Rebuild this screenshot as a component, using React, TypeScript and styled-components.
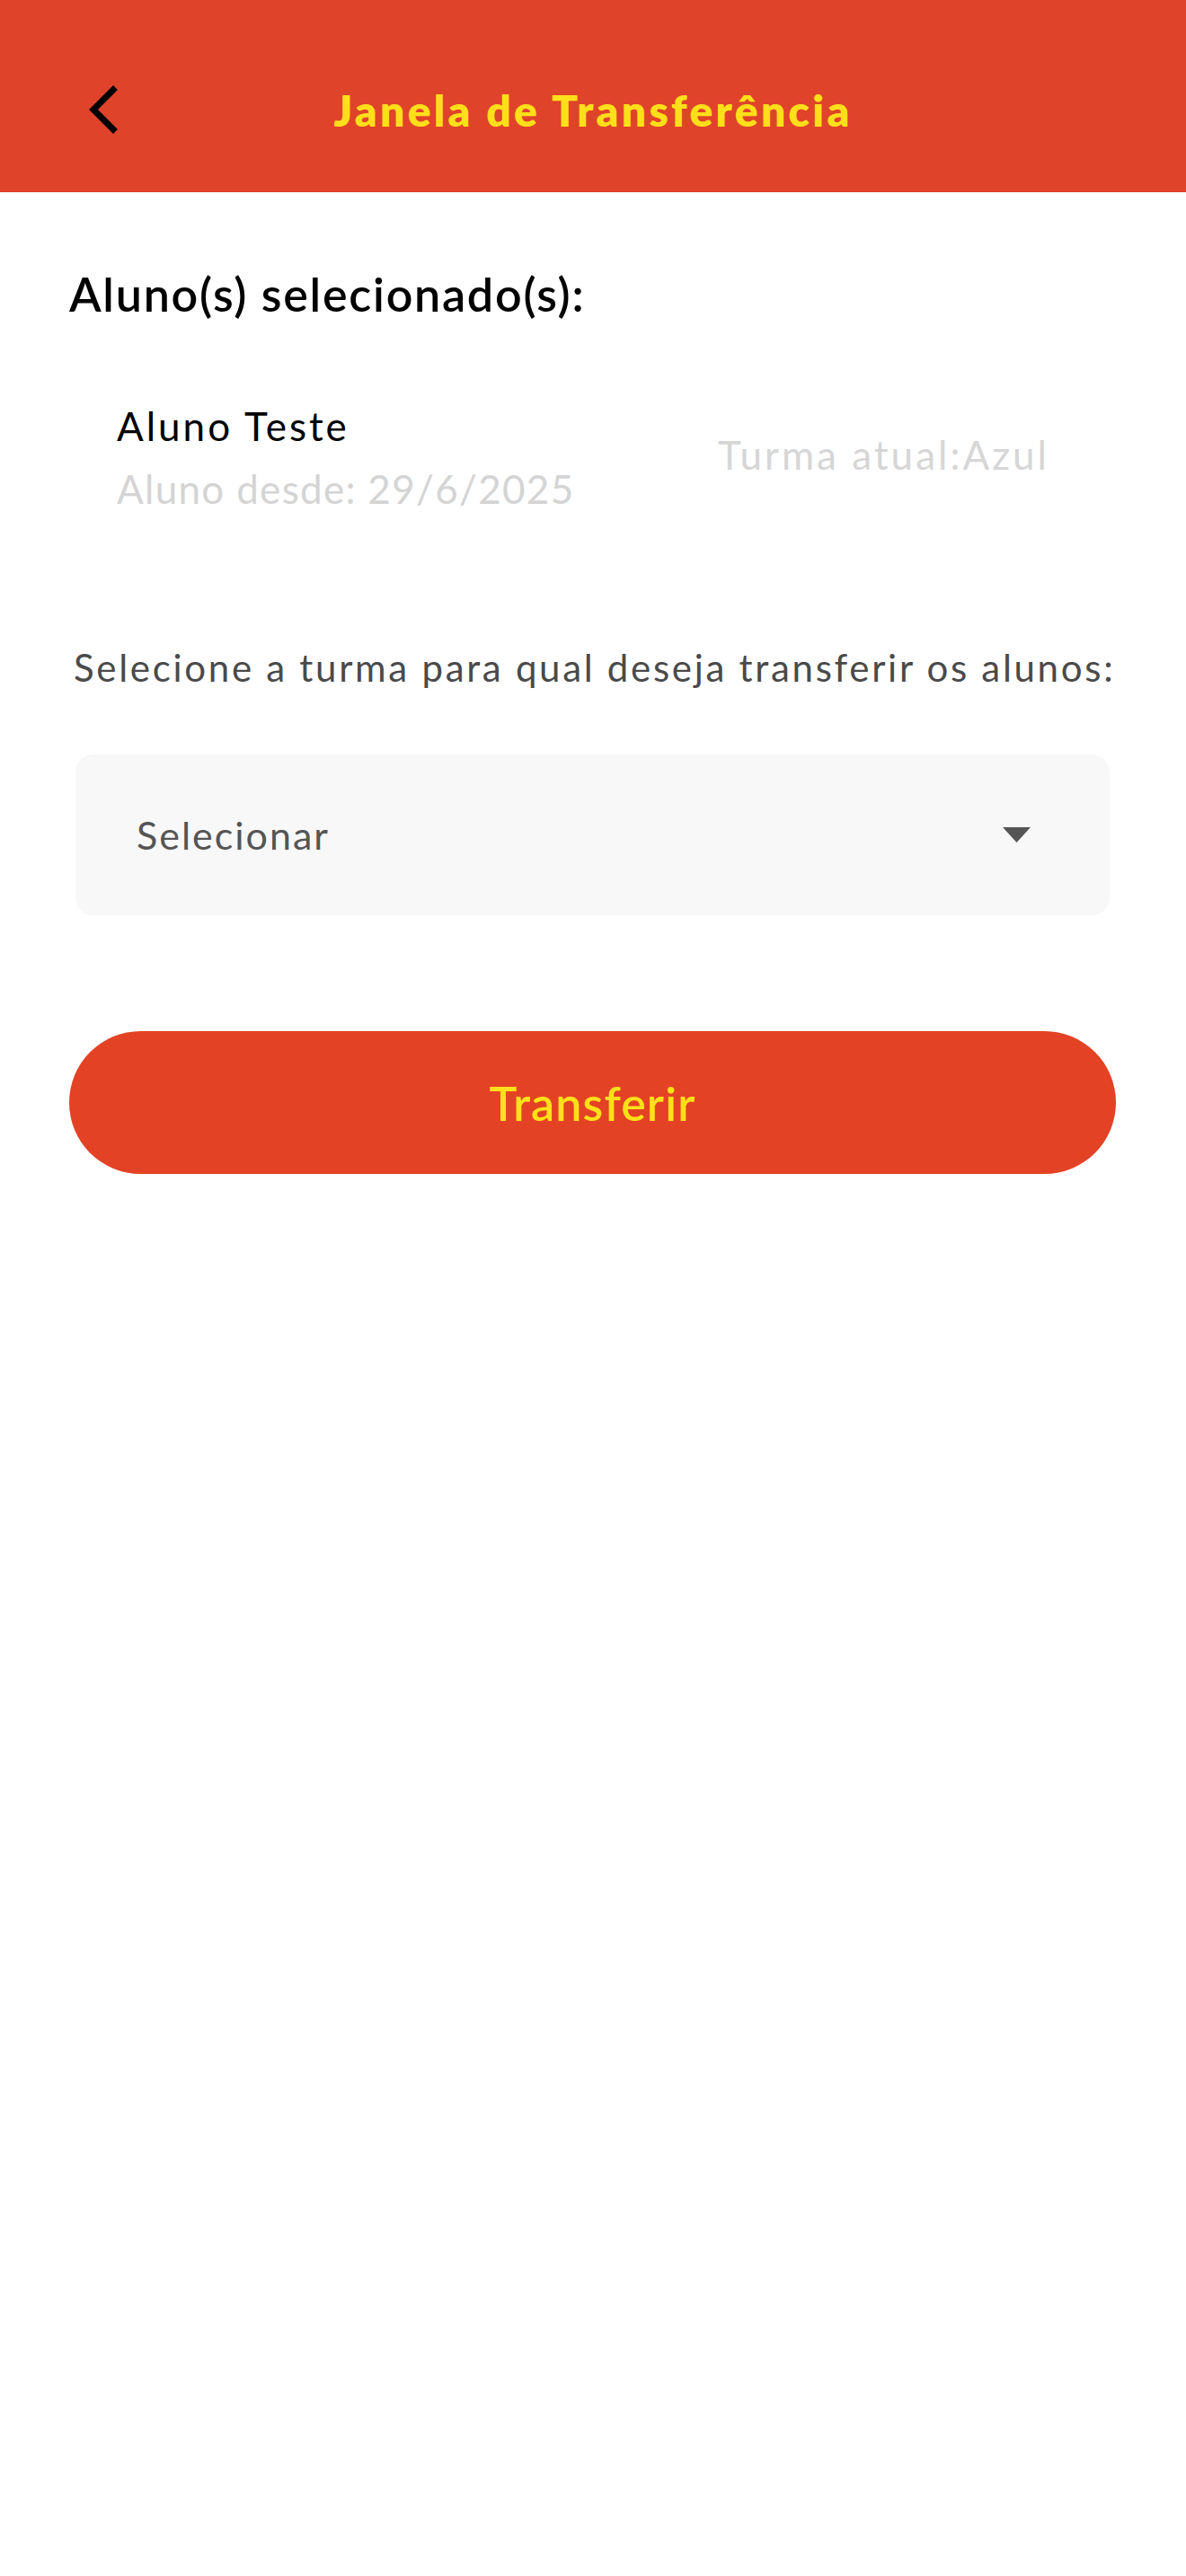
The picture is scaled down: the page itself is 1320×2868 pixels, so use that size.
import * as React from "react";
import styled, { createGlobalStyle } from "styled-components";

const GlobalStyle = createGlobalStyle`
  html, body {
    margin: 0;
    padding: 0;
    background: #ffffff;
  }
  body {
    font-family: 'Lato', 'Noto Sans', sans-serif;
  }
`;

const Page = styled.div`
  width: 1320px;
  min-height: 2868px;
  background: #ffffff;
`;

const Header = styled.header`
  height: 214px;
  box-sizing: border-box;
  padding-top: 30px;
  background: #df432a;
  display: grid;
  grid-template-columns: 1fr auto 1fr;
  align-items: center;
`;

const BackButton = styled.button`
  justify-self: start;
  margin-left: 92px;
  width: 46px;
  height: 56px;
  padding: 0;
  border: none;
  background: transparent;
  display: flex;
  align-items: center;
  justify-content: center;
  cursor: pointer;
`;

const Title = styled.h1`
  margin: 0;
  font-size: 48px;
  font-weight: 800;
  color: #ffdf1a;
  letter-spacing: 3.3px;
`;

const Content = styled.main`
  padding: 83px 78px 0 77px;
  display: flex;
  flex-direction: column;
`;

const SectionTitle = styled.h2`
  margin: 0;
  font-size: 52px;
  line-height: 60px;
  font-weight: 600;
  letter-spacing: 1.75px;
  color: #000000;
`;

const StudentRow = styled.div`
  margin-top: 82px;
  padding-left: 53px;
  display: flex;
  align-items: center;
`;

const StudentInfo = styled.div`
  width: 669px;
  display: flex;
  flex-direction: column;
`;

const StudentLine = styled.span<{ $muted?: boolean }>`
  font-size: 44px;
  line-height: 70px;
  letter-spacing: ${(p) => (p.$muted ? "1.3px" : "3px")};
  color: ${(p) => (p.$muted ? "#d4d4d4" : "#000000")};
`;

const CurrentClass = styled.span`
  font-size: 44px;
  line-height: 70px;
  letter-spacing: 3px;
  color: #d6d6d6;
  margin-top: -6px;
`;

const Instruction = styled.p`
  margin: 134px 0 0 5px;
  font-size: 42px;
  line-height: 60px;
  letter-spacing: 2.7px;
  color: #4a4a4a;
`;

const SelectBox = styled.div`
  margin: 67px 7px 0;
  height: 179px;
  box-sizing: border-box;
  padding: 0 88px 0 68px;
  background: #f8f8f8;
  border-radius: 20px;
  display: flex;
  align-items: center;
  justify-content: space-between;
`;

const SelectLabel = styled.span`
  font-size: 43px;
  letter-spacing: 2px;
  color: #555555;
`;

const PrimaryButton = styled.button`
  margin-top: 129px;
  height: 159px;
  border: none;
  border-radius: 80px;
  background: #e44225;
  color: #ffe01a;
  font-family: 'Lato', 'Noto Sans', sans-serif;
  font-size: 52px;
  font-weight: 600;
  letter-spacing: 1.1px;
  cursor: pointer;
`;

export default function App() {
  return (
    <Page>
      <GlobalStyle />
      <Header>
        <BackButton aria-label="Voltar">
          <svg width="46" height="56" viewBox="0 0 46 56">
            <polyline
              points="34,6 12,28 34,50"
              fill="none"
              stroke="#000"
              strokeWidth="7"
              strokeLinecap="square"
            />
          </svg>
        </BackButton>
        <Title>Janela de Transferência</Title>
        <div />
      </Header>
      <Content>
        <SectionTitle>Aluno(s) selecionado(s):</SectionTitle>
        <StudentRow>
          <StudentInfo>
            <StudentLine>Aluno Teste</StudentLine>
            <StudentLine $muted>Aluno desde: 29/6/2025</StudentLine>
          </StudentInfo>
          <CurrentClass>Turma atual:Azul</CurrentClass>
        </StudentRow>
        <Instruction>Selecione a turma para qual deseja transferir os alunos:</Instruction>
        <SelectBox>
          <SelectLabel>Selecionar</SelectLabel>
          <svg width="31" height="17" viewBox="0 0 31 17">
            <polygon points="0,0 31,0 15.5,17" fill="#555" />
          </svg>
        </SelectBox>
        <PrimaryButton>Transferir</PrimaryButton>
      </Content>
    </Page>
  );
}
